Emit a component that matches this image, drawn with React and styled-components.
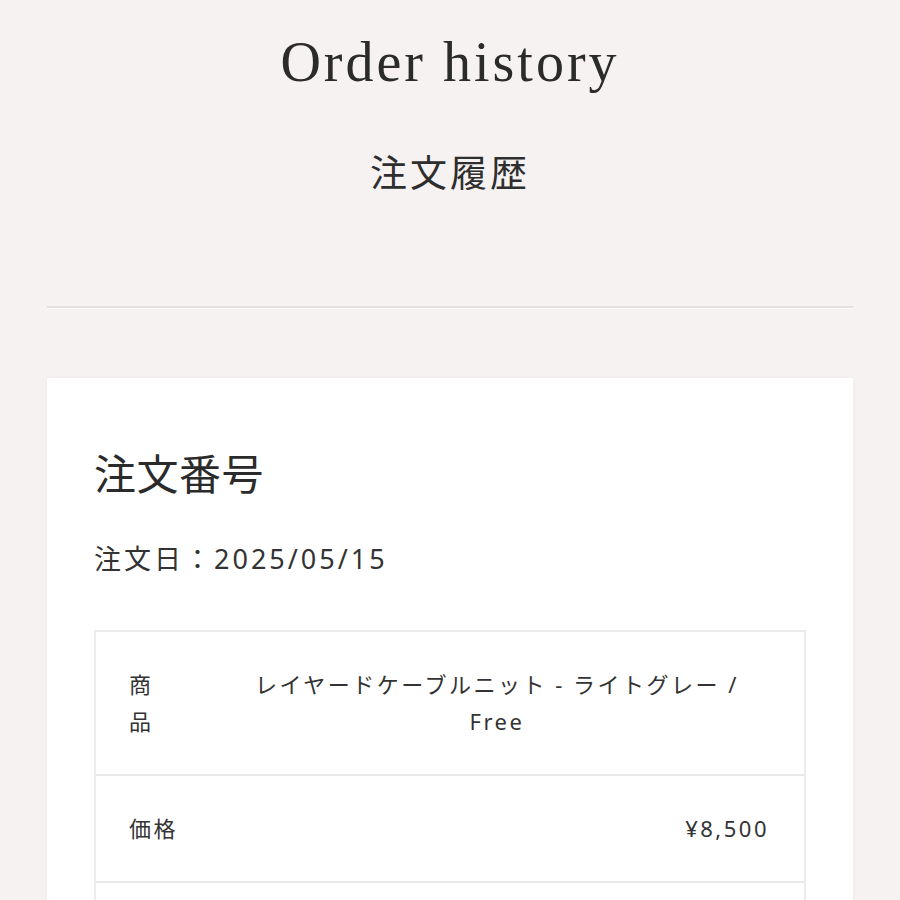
import React from "react";
import styled, { createGlobalStyle } from "styled-components";

const GlobalStyle = createGlobalStyle`
  html, body { margin: 0; padding: 0; background: #f6f2f2; }
  body {
    font-family: "Noto Sans", "Noto Sans CJK JP", sans-serif;
    color: #2e2e2e;
  }
  * { box-sizing: border-box; }
`;

const Page = styled.div`
  padding: 29px 47px 40px 47px;
`;

const Header = styled.header`
  display: flex;
  flex-direction: column;
  align-items: center;
`;

const Title = styled.h1`
  margin: 0;
  font-family: "Liberation Serif", "Times New Roman", serif;
  font-weight: 400;
  font-size: 56px;
  line-height: 67px;
  letter-spacing: 3px;
  color: #2b2b2b;
`;

const Subtitle = styled.h2`
  margin: 50px 0 0 0;
  font-family: "Noto Sans CJK JP", sans-serif;
  font-weight: 400;
  font-size: 37px;
  line-height: 50px;
  letter-spacing: 3px;
  color: #2e2e2e;
`;

const Divider = styled.hr`
  margin: 110px 0 0 0;
  border: none;
  height: 2px;
  background: #e5e0e0;
  box-shadow: 0 1px 1px rgba(255, 255, 255, 0.8);
`;

const Card = styled.section`
  margin-top: 70px;
  background: #ffffff;
  box-shadow: 0 0 4px rgba(0, 0, 0, 0.04);
  padding: 64px 47px 60px 47px;
`;

const OrderNumber = styled.h3`
  margin: 0;
  font-family: "Noto Sans CJK JP", sans-serif;
  font-weight: 400;
  font-size: 42px;
  line-height: 60px;
  letter-spacing: 0.5px;
  color: #2b2b2b;
`;

const OrderDate = styled.p`
  margin: 37px 0 0 0;
  font-family: "Noto Sans", "Noto Sans CJK JP", sans-serif;
  font-size: 27px;
  line-height: 40px;
  letter-spacing: 3px;
  color: #333;
`;

const Table = styled.div`
  margin-top: 51px;
  border: 2px solid #ebebeb;
  border-bottom: none;
  display: flex;
  flex-direction: column;
`;

const Row = styled.div`
  display: flex;
  align-items: center;
  justify-content: space-between;
  gap: 20px;
  min-height: 107px;
  padding: 34px 35px 34px 33px;
  border-bottom: 2px solid #e8e8e8;
  font-family: "Noto Sans", "Noto Sans CJK JP", sans-serif;
  font-size: 22px;
  line-height: 37px;
  letter-spacing: 2.5px;
  color: #333;
`;

const Label = styled.div`
  flex: 0 0 ${(p) => (p.$narrow ? "26px" : "auto")};
  word-break: break-all;
`;

const Value = styled.div`
  flex: ${(p) => (p.$center ? "1 1 auto" : "0 0 auto")};
  text-align: ${(p) => (p.$center ? "center" : "right")};
  padding-left: ${(p) => (p.$center ? "50px" : "0")};
`;

export default function App() {
  return (
    <>
      <GlobalStyle />
      <Page>
        <Header>
          <Title>Order history</Title>
          <Subtitle>注文履歴</Subtitle>
        </Header>
        <Divider />
        <Card>
          <OrderNumber>注文番号</OrderNumber>
          <OrderDate>注文日：2025/05/15</OrderDate>
          <Table>
            <Row>
              <Label $narrow>商品</Label>
              <Value $center>レイヤードケーブルニット - ライトグレー / Free</Value>
            </Row>
            <Row>
              <Label>価格</Label>
              <Value>¥8,500</Value>
            </Row>
            <Row />
          </Table>
        </Card>
      </Page>
    </>
  );
}
